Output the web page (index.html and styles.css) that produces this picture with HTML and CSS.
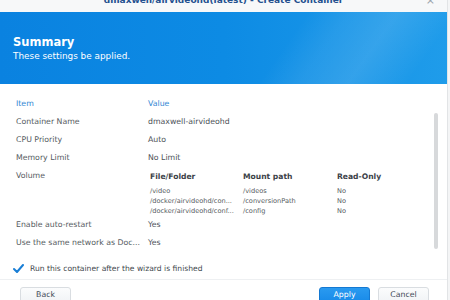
FILE: index.html
```html
<!DOCTYPE html>
<html>
<head>
<meta charset="utf-8">
<link rel="stylesheet" href="styles.css">
</head>
<body>
<div class="dialog">
  <div class="titlebar">
    <span class="title">dmaxwell/airvideohd(latest) - Create Container</span>
    <span class="close">×</span>
  </div>
  <div class="header">
    <div class="h-title">Summary</div>
    <div class="h-sub">These settings be applied.</div>
  </div>
  <div class="body">
    <div class="scroll">
      <div class="row head"><span class="k">Item</span><span class="v">Value</span></div>
      <div class="row"><span class="k">Container Name</span><span class="v">dmaxwell-airvideohd</span></div>
      <div class="row"><span class="k">CPU Priority</span><span class="v">Auto</span></div>
      <div class="row"><span class="k">Memory Limit</span><span class="v">No Limit</span></div>
      <div class="row vol">
        <span class="k">Volume</span>
        <div class="v voltable">
          <div class="vh">File/Folder</div><div class="vh">Mount path</div><div class="vh">Read-Only</div>
          <div class="vc">/video</div><div class="vc">/videos</div><div class="vc">No</div>
          <div class="vc">/docker/airvideohd/con...</div><div class="vc">/conversionPath</div><div class="vc">No</div>
          <div class="vc">/docker/airvideohd/conf...</div><div class="vc">/config</div><div class="vc">No</div>
        </div>
      </div>
      <div class="row"><span class="k">Enable auto-restart</span><span class="v">Yes</span></div>
      <div class="row"><span class="k">Use the same network as Doc...</span><span class="v">Yes</span></div>
      <div class="scrollbar"></div>
    </div>
    <label class="check">
      <svg width="11" height="9" viewBox="0 0 11 9"><path d="M1 5 L4 8 L10 1" fill="none" stroke="#1a7fd6" stroke-width="2" stroke-linecap="round" stroke-linejoin="round"/></svg>
      <span>Run this container after the wizard is finished</span>
    </label>
    <div class="footer">
      <button class="btn">Back</button>
      <span class="spacer"></span>
      <button class="btn primary">Apply</button>
      <button class="btn">Cancel</button>
    </div>
  </div>
</div>
</body>
</html>
```
FILE: styles.css
```css
* { box-sizing: border-box; }
html, body { margin: 0; padding: 0; }
body {
  width: 450px; height: 300px; overflow: hidden;
  background: #f4f5f6;
  font-family: "DejaVu Sans", Verdana, sans-serif;
}
.dialog {
  width: 448px; height: 300px;
  background: #fff;
  border-right: 1px solid #e2e4e6;
  display: flex; flex-direction: column;
}
.titlebar {
  height: 12px; flex: none;
  background: #f7f8f9;
  display: flex; justify-content: center; align-items: flex-start;
  position: relative;
  overflow: hidden;
}
.title {
  margin-top: -6px;
  font-size: 9px; font-weight: bold; color: #24508f;
  line-height: 12px;
}
.close {
  position: absolute; right: 12px; top: -5px;
  font-size: 11px; color: #9aa3ad; line-height: 12px;
}
.header {
  height: 72px; flex: none;
  background:
    linear-gradient(125deg, rgba(255,255,255,0) 0%, rgba(255,255,255,0) 62%, rgba(255,255,255,0.07) 70%, rgba(255,255,255,0.12) 80%, rgba(255,255,255,0) 92%),
    linear-gradient(90deg, #0a82e0 0%, #0d8be4 50%, #1f9cea 100%);
  padding: 23px 0 0 13px;
  color: #fff;
}
.h-title { font-size: 11.5px; font-weight: bold; line-height: 14px; }
.h-sub { font-size: 8.9px; line-height: 11px; margin-top: 2px; }
.body { flex: 1; display: flex; flex-direction: column; padding: 0 0 0 0; }
.scroll {
  position: relative;
  padding: 15px 0 0 16px;
  height: 172px;
}
.row {
  display: flex; align-items: flex-start;
  font-size: 7.8px; color: #555b61;
  height: 18px; line-height: 10px;
}
.row .k { width: 132px; flex: none; white-space: nowrap; }
.row .v { color: #4b5157; }
.row.head { color: #2f86d3; }
.row.head .v { color: #2f86d3; }
.row.vol { height: 49px; }
.voltable {
  display: grid;
  grid-template-columns: 93px 94px 60px;
  margin-left: 2px;
}
.vh { font-weight: bold; font-size: 7.6px; color: #3c4248; line-height: 12px; margin-bottom: 3px; }
.vc { font-size: 6.6px; line-height: 10px; color: #555b61; }
.scrollbar {
  position: absolute; right: 9px; top: 29px;
  width: 4px; height: 136px;
  background: #d7d9db; border-radius: 2px;
}
.check {
  display: flex; align-items: center; gap: 6px;
  padding-left: 13px; margin-top: 6px;
  font-size: 7.6px; color: #41474d;
  height: 12px;
}
.footer {
  margin-top: 5px;
  border-top: 1px solid #eef0f2;
  display: flex; gap: 8px;
  padding: 7px 18px 0 20px;
}
.spacer { flex: 1; }
.btn {
  width: 51px; height: 20px;
  border: 1px solid #d9dde1; border-radius: 3px;
  background: linear-gradient(#fbfcfd, #eef1f4);
  font-family: inherit; font-size: 7.8px; color: #3f4a56;
  padding: 0 0 6px 0;
}
.btn.primary {
  background: linear-gradient(#2a9af0, #1386e6);
  border-color: #1479d2; color: #fff;
}
```
